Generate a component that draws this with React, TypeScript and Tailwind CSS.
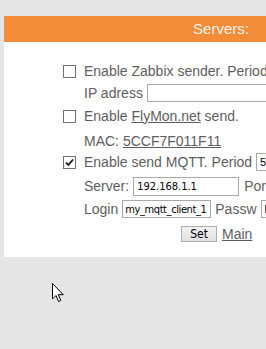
import React from "react";

const label = "text-[14px] text-[#5e5e5e] whitespace-nowrap";
const field =
  "border border-[#a9a9a9] bg-white text-black text-[11px] px-[3px] outline-none";
const small = { fontFamily: '"DejaVu Sans Condensed", "DejaVu Sans", sans-serif' };

const Box = ({ checked = false }: { checked?: boolean }) => (
  <span className="flex h-[13px] w-[13px] shrink-0 items-center justify-center border border-[#707070] bg-white">
    {checked && (
      <svg width="9" height="9" viewBox="0 0 9 9">
        <path d="M1 4.5 L3.4 7 L8 1.5" fill="none" stroke="#111" strokeWidth="1.8" />
      </svg>
    )}
  </span>
);

const Row = ({ h, mt, children }: { h: string; mt: string; children: React.ReactNode }) => (
  <div className={`flex items-center ${h} ${mt}`}>{children}</div>
);

const App = () => {
  return (
    <div
      className="relative h-[349px] w-[266px] overflow-hidden bg-[#e5e5e5]"
      style={{ fontFamily: '"Liberation Sans", Arial, sans-serif' }}
    >
      <div className="ml-[4px] mt-[16px] w-[434px] bg-white pb-[15px]">
        <div className="flex h-[26px] items-center justify-center bg-[#f28c38] text-[15px] text-[#fff4ea]">
          Servers:
        </div>

        <div className="pl-[59px] pt-[19px]">
          <Row h="h-[20px]" mt="mt-0">
            <Box />
            <span className={`${label} ml-[8px]`}>Enable Zabbix sender. Period</span>
          </Row>

          <Row h="h-[20px]" mt="mt-[2px]">
            <span className={`${label} ml-[21px]`}>IP adress</span>
            <input className={`${field} ml-[4px] h-[18px] w-[200px]`} defaultValue="" />
          </Row>

          <Row h="h-[20px]" mt="mt-[3px]">
            <Box />
            <span className={`${label} ml-[8px]`}>
              Enable <span className="underline">FlyMon.net</span> send.
            </span>
          </Row>

          <Row h="h-[20px]" mt="mt-[5px]">
            <span className={`${label} ml-[21px]`}>
              MAC: <span className="underline">5CCF7F011F11</span>
            </span>
          </Row>

          <Row h="h-[20px]" mt="mt-px">
            <Box checked />
            <span className={`${label} ml-[8px]`}>Enable send MQTT. Period</span>
            <input className={`${field} ml-[4px] h-[18px] w-[40px]`} defaultValue="5" />
          </Row>

          <Row h="h-[20px]" mt="mt-[4px]">
            <span className={`${label} ml-[21px]`}>Server:</span>
            <input
              className={`${field} ml-[4px] h-[19px] w-[106px]`}
              style={small}
              defaultValue="192.168.1.1"
            />
            <span className={`${label} ml-[5px]`}>Port</span>
          </Row>

          <Row h="h-[20px]" mt="mt-[3px]">
            <span className={`${label} ml-[21px]`}>Login</span>
            <input
              className={`${field} ml-[4px] h-[18px] w-[89px] !px-[2px] tracking-[-0.4px]`}
              style={small}
              defaultValue="my_mqtt_client_1"
            />
            <span className={`${label} ml-[4px]`}>Passw</span>
            <input className={`${field} ml-[4px] h-[18px] w-[60px]`} defaultValue="ls" />
          </Row>

          <div className="mt-[7px] flex h-[16px] items-center pl-[118px]">
            <button
              className="flex h-[16px] w-[36px] items-center justify-center border border-[#adadad] bg-gradient-to-b from-[#f2f2f2] to-[#e1e1e1] text-[12px] text-black"
              style={small}
            >
              Set
            </button>
            <span className={`${label} ml-[5px] underline`}>Main</span>
          </div>
        </div>
      </div>

      <svg
        className="absolute left-[52px] top-[283px]"
        width="13"
        height="20"
        viewBox="0 0 13 20"
      >
        <path
          d="M0.5 0.5 L0.5 16 L4 12.5 L6.5 18.5 L8.8 17.5 L6.3 11.7 L11.3 11.7 Z"
          fill="#fff"
          stroke="#000"
          strokeWidth="1"
        />
      </svg>
    </div>
  );
};

export default App;
